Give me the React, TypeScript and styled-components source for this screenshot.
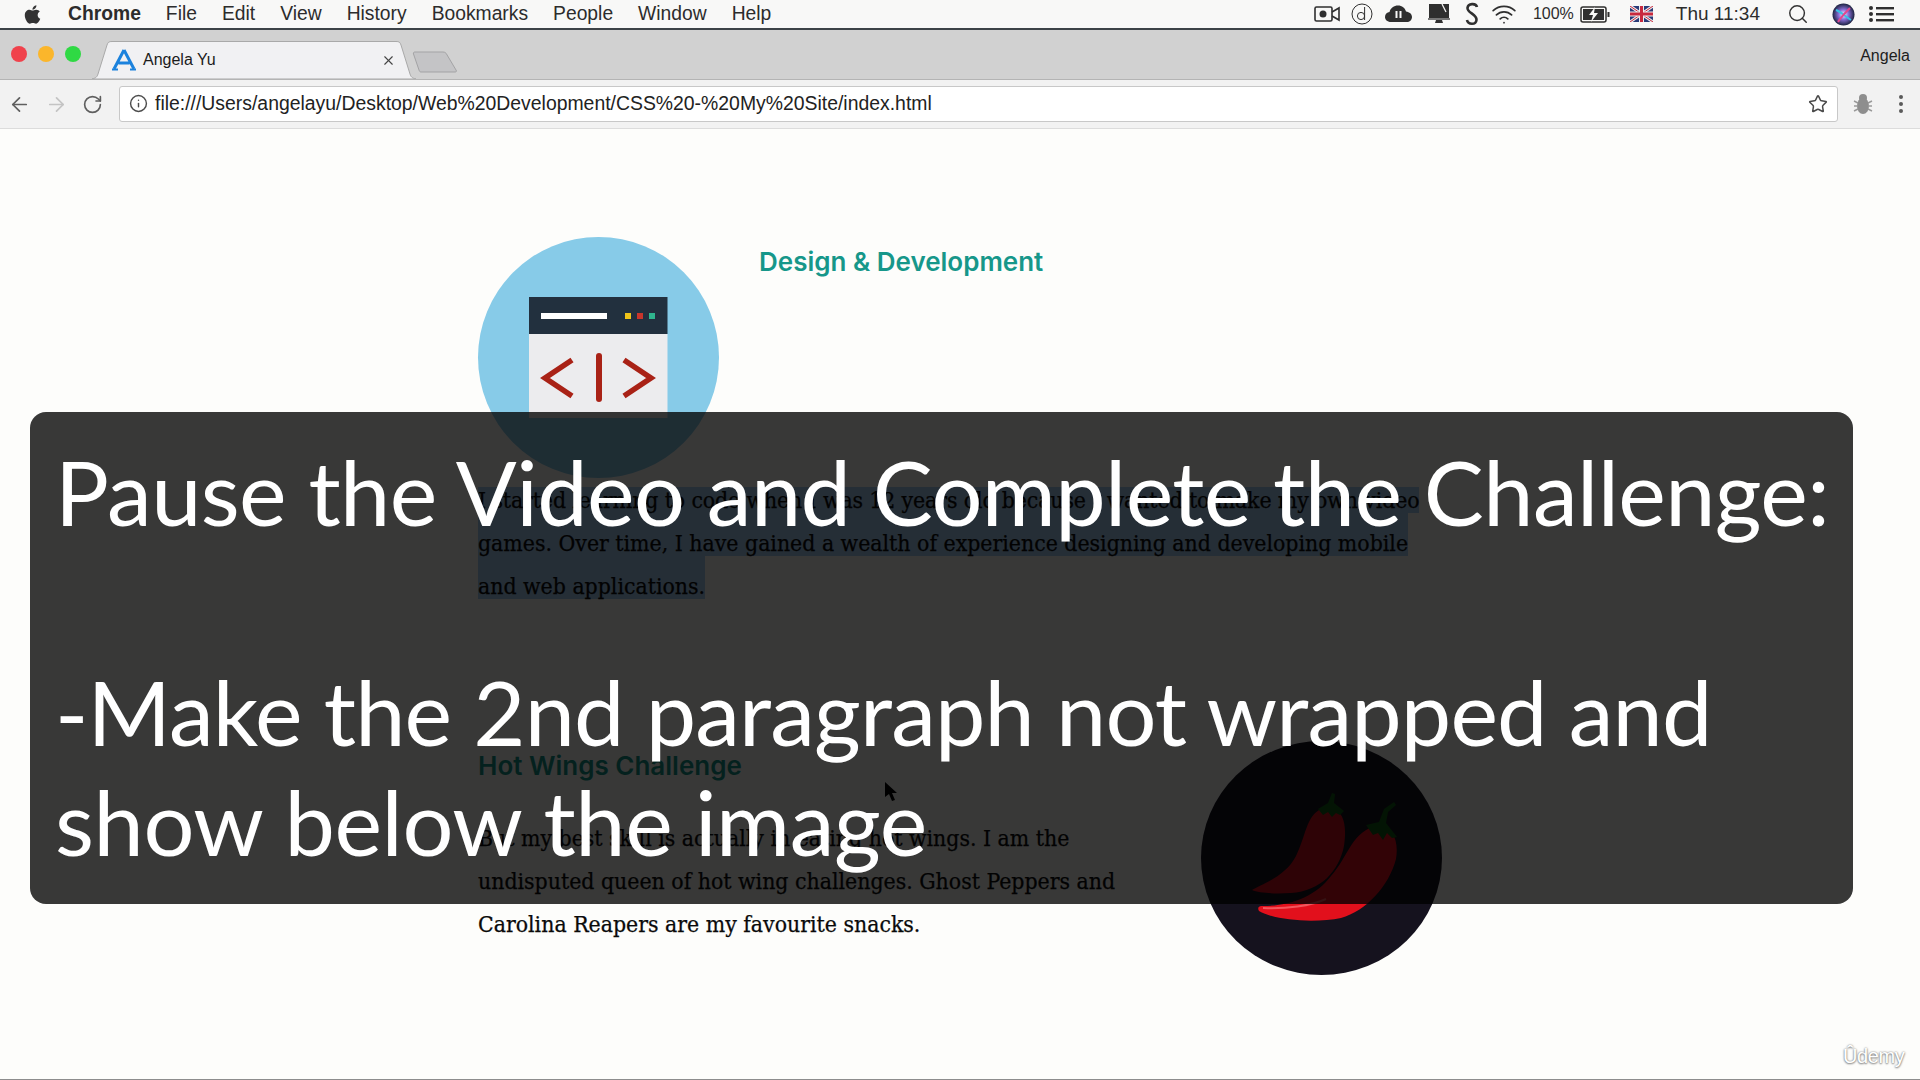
import React from 'react'
import styled, { createGlobalStyle } from 'styled-components'
import { ArrowLeft, ArrowRight, Info, RotateCw, Search, Star, Wifi, X } from 'lucide-react'
import { FaApple } from 'react-icons/fa'

const GlobalStyle = createGlobalStyle`
    html, body {
        background: #fdfdfb;
        height: 1080px;
        margin: 0;
        overflow: hidden;
        width: 1920px;
    }

    body {
        font-family: 'Liberation Sans', Arial, sans-serif;
    }
`

const Screen = styled.div`
    display: flex;
    flex-direction: column;
    height: 1080px;
    position: relative;
    width: 1920px;
`

/* mac menu bar */

const MenuBar = styled.div`
    align-items: center;
    background: #f8f8f7;
    border-bottom: 2px solid #3c4247;
    box-sizing: border-box;
    color: #2c2c2c;
    display: flex;
    flex: none;
    font-size: 19.3px;
    height: 30px;
    padding: 0 26px 0 22px;
`

const AppleLogo = styled(FaApple)`
    color: #333;
    font-size: 21px;
    margin-right: 25px;
`

const MenuItems = styled.div`
    display: flex;
    gap: 25px;
`

const MenuItem = styled.span<{ $bold?: boolean }>`
    font-weight: ${({ $bold }) => ($bold ? 700 : 400)};
`

const Tray = styled.div`
    align-items: center;
    display: flex;
    margin-left: auto;
`

const TrayIcon = styled.svg<{ $gap: number }>`
    color: #2f2f2f;
    display: block;
    flex: none;
    margin-right: ${({ $gap }) => $gap}px;
`

const TrayText = styled.span<{ $gap: number; $size: number }>`
    font-size: ${({ $size }) => $size}px;
    margin-right: ${({ $gap }) => $gap}px;
`

const TrayWifi = styled(Wifi)`
    color: #2f2f2f;
    flex: none;
    margin-right: 16px;
`

const TraySearch = styled(Search)`
    color: #333;
    flex: none;
    margin-right: 23px;
`

/* chrome tab strip */

const TabStrip = styled.div`
    align-items: flex-end;
    background: #d1d1d1;
    border-bottom: 1px solid #b4b4b4;
    box-sizing: border-box;
    display: flex;
    flex: none;
    height: 50px;
    padding-left: 11px;
`

const Lights = styled.div`
    align-items: center;
    align-self: center;
    display: flex;
    gap: 11px;
    margin-top: -2px;
`

const Light = styled.div<{ $color: string }>`
    background: ${({ $color }) => $color};
    border-radius: 50%;
    height: 16px;
    width: 16px;
`

const Tab = styled.div`
    align-items: center;
    box-sizing: border-box;
    color: #1b1b1b;
    display: flex;
    font-size: 16px;
    height: 38px;
    margin-left: 11px;
    padding: 0 20px 0 20px;
    position: relative;
    width: 324px;
`

const TabShape = styled.svg`
    left: 0;
    position: absolute;
    top: 0;
`

const Favicon = styled.svg`
    flex: none;
    margin-right: 7px;
    position: relative;
`

const TabTitle = styled.span`
    position: relative;
`

const TabClose = styled(X)`
    color: #444;
    margin-left: auto;
    position: relative;
`

const NewTab = styled.svg`
    align-self: flex-end;
    flex: none;
    margin: 0 0 6px -4px;
`

const Profile = styled.span`
    align-self: center;
    color: #1d1d1d;
    font-size: 16px;
    margin: 2px 10px 0 auto;
`

/* chrome toolbar */

const Toolbar = styled.div`
    align-items: center;
    background: #f2f2f2;
    border-bottom: 1px solid #dcdcdc;
    box-sizing: border-box;
    display: flex;
    flex: none;
    height: 49px;
    padding-left: 8px;
`

const NavButton = styled.div<{ $faded?: boolean }>`
    color: ${({ $faded }) => ($faded ? '#c4c4c4' : '#5f5f5f')};
    display: flex;
    flex: none;
    margin-right: 14px;
`

const Omnibox = styled.div`
    align-items: center;
    background: #fff;
    border: 1px solid #c8c8c8;
    border-radius: 3px;
    box-sizing: border-box;
    display: flex;
    flex: none;
    height: 36px;
    margin: -1px 0 0 2px;
    padding: 0 9px 0 9px;
    width: 1719px;
`

const InfoIcon = styled(Info)`
    color: #4c4c4c;
    flex: none;
    margin-right: 7px;
`

const Url = styled.span`
    color: #222;
    font-size: 19.4px;
    white-space: nowrap;
`

const StarIcon = styled(Star)`
    color: #4a4a4a;
    flex: none;
    margin-left: auto;
`

const BugIcon = styled.svg`
    flex: none;
    margin-left: 15px;
`

const MoreDots = styled.svg`
    flex: none;
    margin-left: 25px;
`

/* the web page */

const Page = styled.div`
    background: #fdfdfb;
    border-bottom: 1px solid #8d8d8d;
    box-sizing: border-box;
    flex: 1;
    padding: 108px 0 0 478px;
`

const Intro = styled.div`
    display: flex;
    gap: 40px;
    height: 233px;
`

const Circle = styled.div<{ $color: string; $height: number }>`
    background: ${({ $color }) => $color};
    border-radius: 50%;
    flex: none;
    height: ${({ $height }) => $height}px;
    overflow: hidden;
    width: 241px;
`

const Heading = styled.h3<{ $top: number }>`
    color: #16978a;
    font-family: Inter, sans-serif;
    font-size: 26px;
    font-weight: 600;
    line-height: 30px;
    margin: ${({ $top }) => $top}px 0 0;
`

const Paragraph = styled.div<{ $top: number }>`
    -webkit-text-stroke: 0.25px #0a0a0a;
    color: #0a0a0a;
    font-family: 'DejaVu Serif', 'Liberation Serif', serif;
    font-size: 22.8px;
    font-stretch: condensed;
    margin-top: ${({ $top }) => $top}px;
`

const Line = styled.div<{ $selected?: boolean; $first?: boolean }>`
    background: ${({ $selected, $first }) =>
        !$selected
            ? 'none'
            : $first
              ? 'linear-gradient(transparent 17px, #a9d0f5 17px)'
              : '#a9d0f5'};
    height: 43px;
    letter-spacing: ${({ $first }) => ($first ? -0.11 : 0)}px;
    line-height: 61px;
    white-space: nowrap;
    width: fit-content;
`

const Hot = styled.div`
    display: flex;
    margin-top: 142px;
    width: 964px;
`

const HotText = styled.div`
    flex: 1;
`

/* video overlay */

const Overlay = styled.div`
    background: rgba(0, 0, 0, 0.78);
    border-radius: 16px;
    box-sizing: border-box;
    color: #fff;
    font-family: Lato, sans-serif;
    font-size: 90px;
    height: 492px;
    left: 30px;
    line-height: 110px;
    padding: 24px 0 0 25px;
    position: absolute;
    top: 412px;
    white-space: nowrap;
    width: 1823px;
`

const OverlayLine = styled.div<{ $gap?: boolean; $spacing: number }>`
    letter-spacing: ${({ $spacing }) => $spacing}px;
    margin-bottom: ${({ $gap }) => ($gap ? 110 : 0)}px;
`

const Cursor = styled.svg`
    left: 884px;
    position: absolute;
    top: 781px;
`

const Watermark = styled.span`
    color: #fff;
    font-family: 'Liberation Sans', sans-serif;
    font-size: 20px;
    left: 1843px;
    letter-spacing: -0.4px;
    position: absolute;
    text-shadow: 0 0 2px #777, 0 1px 2px #888;
    top: 1045px;
`

const MENU = ['File', 'Edit', 'View', 'History', 'Bookmarks', 'People', 'Window', 'Help']

function BrowserArt() {
    return (
        <svg width="241" height="241" viewBox="0 0 241 241">
            <rect x="51" y="60" width="138.500" height="37" fill="#22303e" />
            <rect x="51" y="97" width="138.500" height="84" fill="#ececee" />
            <rect x="63" y="76" width="66" height="6" fill="#fff" />
            <rect x="147" y="76" width="6" height="6" fill="#f0c419" />
            <rect x="159" y="76" width="6" height="6" fill="#c8352b" />
            <rect x="171" y="76" width="6" height="6" fill="#2fb58e" />
            <g fill="none" stroke="#a92216" strokeWidth="5.500">
                <path d="M94 123 L67 141 L94 159" />
                <path d="M121 119 V162" strokeWidth="6" strokeLinecap="round" />
                <path d="M146 123 L173 141 L146 159" />
            </g>
        </svg>
    )
}

function ChiliArt() {
    return (
        <svg width="241" height="234" viewBox="0 0 241 234">
            <path
                d="M131 68 C143 70 146 85 143 105 C138 130 120 150 90 152 C72 153 58 152 51 149 C60 144 85 135 95 115 C105 95 105 75 120 68 Z"
                fill="#cf111b"
            />
            <path
                d="M178 84 C192 86 198 100 195 118 C188 145 165 170 140 177 C115 182 75 180 58 170 C56 166 58 165 62 165 C90 165 115 155 130 135 C148 115 150 90 178 84 Z"
                fill="#e2101c"
            />
            <path d="M62 167 C85 168 110 165 125 158" fill="none" stroke="#f3565c" strokeWidth="2" />
            <path
                d="M117 68 L127 62 L131 52 L134 53 L133 62 L143 70 L139 74 L135 72 L131 76 L127 71 L122 74 Z"
                fill="#0e5e12"
            />
            <path
                d="M165 84 L178 81 L183 68 L193 61 L195 64 L187 71 L185 82 L196 96 L191 97 L186 92 L182 99 L177 92 L172 94 Z"
                fill="#0e5e12"
            />
        </svg>
    )
}

export default function App() {
    return (
        <Screen>
            <GlobalStyle />
            <MenuBar>
                <AppleLogo />
                <MenuItems>
                    <MenuItem $bold>Chrome</MenuItem>
                    {MENU.map((item) => (
                        <MenuItem key={item}>{item}</MenuItem>
                    ))}
                </MenuItems>
                <Tray>
                    <TrayIcon $gap={11} width="26" height="18" viewBox="0 0 26 18">
                        <rect x="1" y="2" width="17" height="14" rx="1.500" fill="none" stroke="currentColor" strokeWidth="1.600" />
                        <circle cx="9" cy="9" r="3.500" fill="currentColor" />
                        <path d="M18 7 L25 3 V15 L18 11" fill="none" stroke="currentColor" strokeWidth="1.600" />
                    </TrayIcon>
                    <TrayIcon $gap={12} width="22" height="22" viewBox="0 0 22 22">
                        <circle cx="11" cy="11" r="10" fill="none" stroke="currentColor" strokeWidth="1" />
                        <circle cx="10" cy="13" r="3.600" fill="none" stroke="currentColor" strokeWidth="1" />
                        <path d="M13.600 4 V17" stroke="currentColor" strokeWidth="1" />
                    </TrayIcon>
                    <TrayIcon $gap={15} width="27" height="18" viewBox="0 0 27 18">
                        <path
                            d="M6 17 C2 17 0 14.500 0 12 C0 9 2 7.500 4.500 7 C5.500 3 9 0.500 13 0.500 C17 0.500 20 3 21 6.500 C24.500 7 27 9 27 12 C27 15 24.500 17 22 17 Z"
                            fill="currentColor"
                        />
                        <rect x="10.500" y="6" width="2" height="7" fill="#f8f8f7" />
                        <rect x="14.500" y="6" width="2" height="7" fill="#f8f8f7" />
                    </TrayIcon>
                    <TrayIcon $gap={13} width="24" height="22" viewBox="0 0 24 22">
                        <path d="M2 1 H22 V15 H2 Z" fill="currentColor" />
                        <path d="M15 1 L19 9" stroke="#f8f8f7" strokeWidth="1.200" />
                        <rect x="1" y="15" width="22" height="2" fill="#777" />
                        <path d="M9 17 H15 L16 20 H8 Z" fill="currentColor" />
                    </TrayIcon>
                    <TrayIcon $gap={11} width="16" height="24" viewBox="0 0 16 24">
                        <path
                            d="M13 5 C12 1 4 1 3.500 6 C3 11 13 12 12.500 18 C12 23 4 23 3 18"
                            fill="none"
                            stroke="currentColor"
                            strokeWidth="2.600"
                        />
                    </TrayIcon>
                    <TrayWifi size={26} strokeWidth={1.600} />
                    <TrayText $gap={6} $size={16}>100%</TrayText>
                    <TrayIcon $gap={20} width="30" height="17" viewBox="0 0 30 17">
                        <rect x="1" y="1" width="25" height="15" rx="2" fill="none" stroke="currentColor" strokeWidth="1.500" />
                        <rect x="3" y="3" width="21" height="11" fill="currentColor" />
                        <path d="M15 1 L9 9 H13 L11 16 L18 7 H14 Z" fill="#f8f8f7" />
                        <rect x="27.500" y="6" width="2" height="5" fill="currentColor" />
                    </TrayIcon>
                    <TrayIcon $gap={23} width="23" height="16" viewBox="0 0 23 16">
                        <rect width="23" height="16" fill="#2a3b78" />
                        <path d="M0 0 L23 16 M23 0 L0 16" stroke="#eee" strokeWidth="3" />
                        <path d="M0 0 L23 16 M23 0 L0 16" stroke="#c8293e" strokeWidth="1" />
                        <path d="M11.500 0 V16 M0 8 H23" stroke="#eee" strokeWidth="5" />
                        <path d="M11.500 0 V16 M0 8 H23" stroke="#c8293e" strokeWidth="3" />
                    </TrayIcon>
                    <TrayText $gap={27} $size={19}>Thu 11:34</TrayText>
                    <TraySearch size={22} strokeWidth={1.600} />
                    <TrayIcon $gap={14} width="23" height="23" viewBox="0 0 23 23">
                        <defs>
                            <radialGradient id="siri">
                                <stop offset="0" stopColor="#f2f6ff" />
                                <stop offset="0.450" stopColor="#8a6fd8" />
                                <stop offset="1" stopColor="#1c2340" />
                            </radialGradient>
                        </defs>
                        <circle cx="11.500" cy="11.500" r="11" fill="url(#siri)" />
                        <path d="M4 7 C9 9 14 14 19 17" stroke="#37c3e6" strokeWidth="2" fill="none" />
                        <path d="M18 5 C14 9 9 14 6 19" stroke="#e0488f" strokeWidth="2" fill="none" />
                    </TrayIcon>
                    <TrayIcon $gap={0} width="25" height="16" viewBox="0 0 25 16">
                        <g fill="currentColor">
                            <circle cx="2" cy="2" r="2" />
                            <circle cx="2" cy="8" r="2" />
                            <circle cx="2" cy="14" r="2" />
                            <rect x="7" y="1" width="18" height="2.400" />
                            <rect x="7" y="7" width="18" height="2.400" />
                            <rect x="7" y="13" width="18" height="2.400" />
                        </g>
                    </TrayIcon>
                </Tray>
            </MenuBar>

            <TabStrip>
                <Lights>
                    <Light $color="#f0424c" />
                    <Light $color="#fbb62b" />
                    <Light $color="#2fd944" />
                </Lights>
                <Tab>
                    <TabShape width="324" height="38" viewBox="0 0 324 38">
                        <path
                            d="M0 38 C4 37 5 36 6 33 L15 4 C16 1 17 0.500 20 0.500 H304 C307 0.500 308 1 309 4 L318 33 C319 36 320 37 324 38 Z"
                            fill="#f1f1f3"
                            stroke="#a9a9a9"
                        />
                    </TabShape>
                    <Favicon width="24" height="22" viewBox="0 0 24 22">
                        <path d="M12 1 L2 20 M12 1 L22 20 M6.500 14 H17.500" stroke="#1b82dd" strokeWidth="3" fill="none" />
                        <path d="M0 20.500 H6 M18 20.500 H24" stroke="#1b82dd" strokeWidth="2" />
                    </Favicon>
                    <TabTitle>Angela Yu</TabTitle>
                    <TabClose size={15} strokeWidth={1.800} />
                </Tab>
                <NewTab width="46" height="22" viewBox="0 0 46 22">
                    <path
                        d="M1.500 3 C1 1.500 2 1 3 1 H31 C33 1 34 2 34.500 3 L44 19 C45 20.500 44 21 43 21 H9 C8 21 7.500 20.500 7 19 Z"
                        fill="#c4c4c6"
                        stroke="#a3a3a5"
                    />
                </NewTab>
                <Profile>Angela</Profile>
            </TabStrip>

            <Toolbar>
                <NavButton>
                    <ArrowLeft size={23} strokeWidth={1.800} />
                </NavButton>
                <NavButton $faded>
                    <ArrowRight size={23} strokeWidth={1.800} />
                </NavButton>
                <NavButton>
                    <RotateCw size={21} strokeWidth={1.900} />
                </NavButton>
                <Omnibox>
                    <InfoIcon size={19} strokeWidth={1.800} />
                    <Url>file:///Users/angelayu/Desktop/Web%20Development/CSS%20-%20My%20Site/index.html</Url>
                    <StarIcon size={20} strokeWidth={1.800} />
                </Omnibox>
                <BugIcon width="20" height="22" viewBox="0 0 20 22">
                    <g fill="#8e8e8e">
                        <circle cx="10" cy="5" r="4" />
                        <ellipse cx="10" cy="13" rx="6" ry="8" />
                    </g>
                    <path d="M1 8 L5 10 M1 13 H5 M1 18 L5 16 M19 8 L15 10 M19 13 H15 M19 18 L15 16" stroke="#9a9a9a" strokeWidth="1.400" />
                </BugIcon>
                <MoreDots width="6" height="20" viewBox="0 0 6 20">
                    <g fill="#5a5a5a">
                        <circle cx="3" cy="3" r="2" />
                        <circle cx="3" cy="10" r="2" />
                        <circle cx="3" cy="17" r="2" />
                    </g>
                </MoreDots>
            </Toolbar>

            <Page>
                <Intro>
                    <Circle $color="#87cbe8" $height={241}>
                        <BrowserArt />
                    </Circle>
                    <Heading $top={10}>Design &amp; Development</Heading>
                </Intro>
                <Paragraph $top={0}>
                    <Line $selected $first>I started learning to code when I was 12 years old because I wanted to make my own video</Line>
                    <Line $selected>games. Over time, I have gained a wealth of experience designing and developing mobile</Line>
                    <Line $selected>and web applications.</Line>
                </Paragraph>
                <Hot>
                    <HotText>
                        <Heading $top={10}>Hot Wings Challenge</Heading>
                        <Paragraph $top={27}>
                            <Line>But my best skill is actually in eating hot wings. I am the</Line>
                            <Line>undisputed queen of hot wing challenges. Ghost Peppers and</Line>
                            <Line>Carolina Reapers are my favourite snacks.</Line>
                        </Paragraph>
                    </HotText>
                    <Circle $color="#15121e" $height={234}>
                        <ChiliArt />
                    </Circle>
                </Hot>
            </Page>

            <Cursor width="16" height="22" viewBox="0 0 16 22">
                <path d="M1 1 L1 16 L5 13 L8 20 L11 19 L8 12 L13 12 Z" fill="#000" />
            </Cursor>

            <Overlay>
                <OverlayLine $gap $spacing={-0.6}>Pause the Video and Complete the Challenge:</OverlayLine>
                <OverlayLine $spacing={-0.88}>-Make the 2nd paragraph not wrapped and</OverlayLine>
                <OverlayLine $spacing={-0.4}>show below the image</OverlayLine>
            </Overlay>

            <Watermark>Ûdemy</Watermark>
        </Screen>
    )
}
